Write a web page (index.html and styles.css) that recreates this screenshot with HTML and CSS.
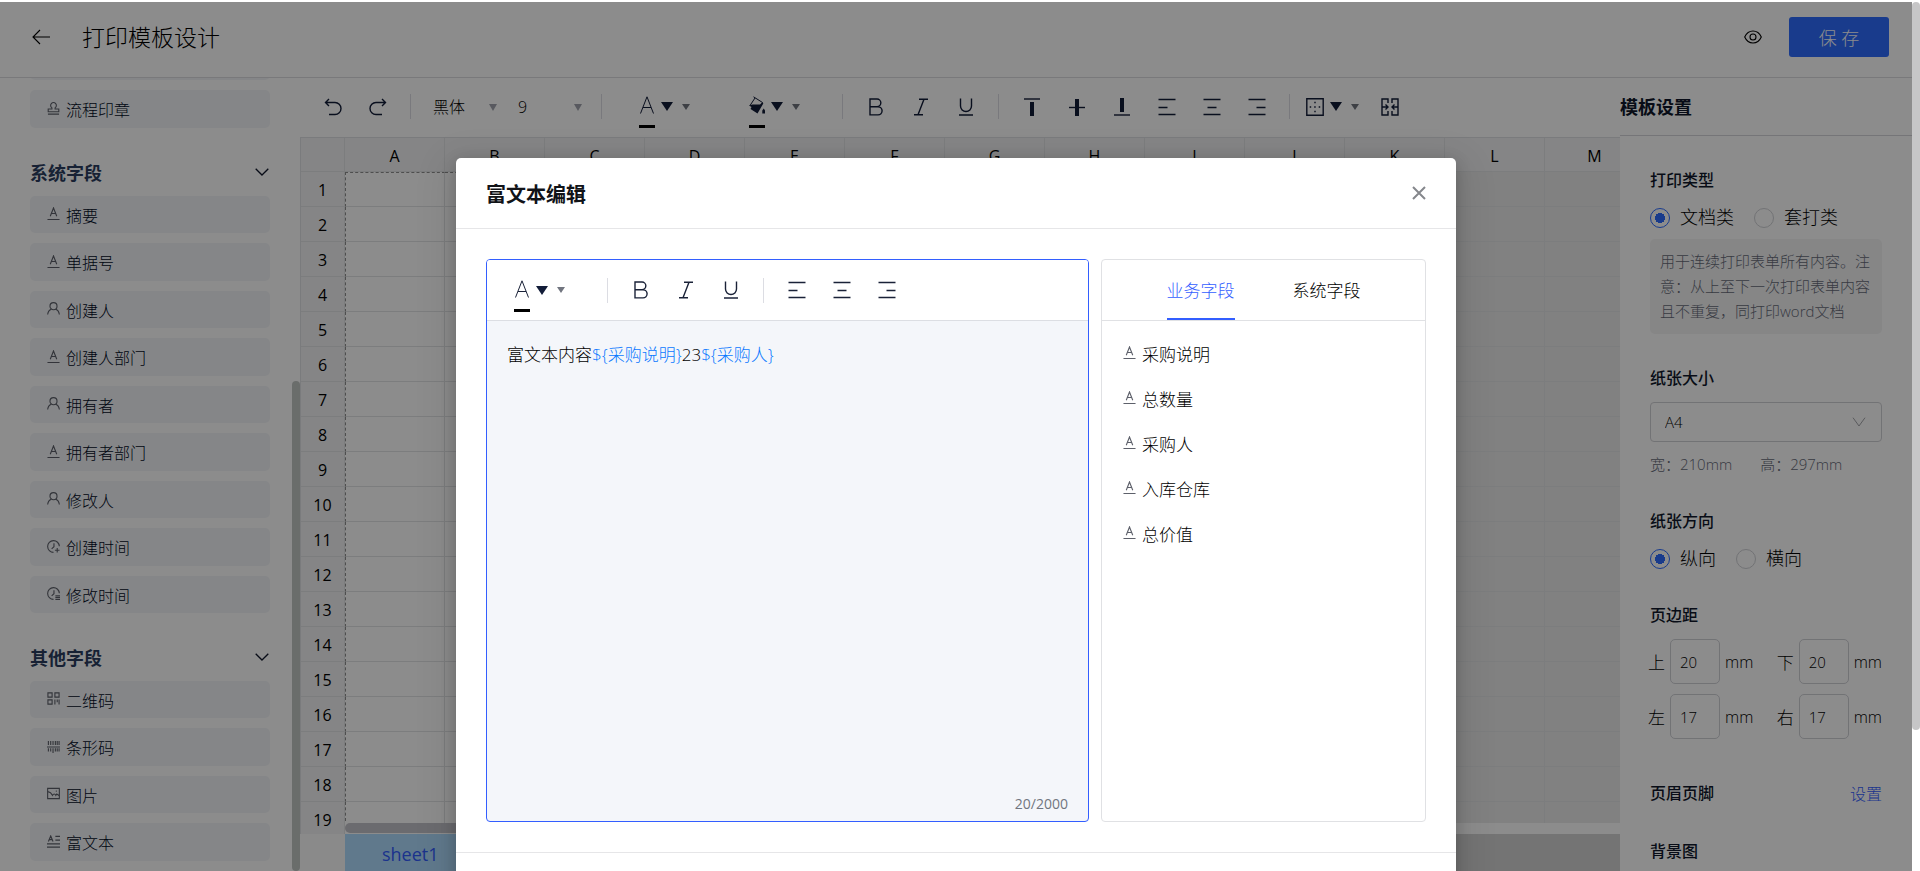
FILE: index.html
```html
<!DOCTYPE html>
<html lang="zh-CN">

<head>
  <meta charset="UTF-8">
  <meta name="viewport" content="width=device-width, initial-scale=1.0">
  <title>打印模板设计</title>
  <link rel="stylesheet" href="styles.css">
</head>

<body>
  <svg class="icon-defs" aria-hidden="true">
    <symbol id="i-text" viewBox="0 0 14 14"><path d="M3.500 10 7 1l3.500 9M4.800 7h4.400M.5 13.500h13" /></symbol>
    <symbol id="i-user" viewBox="0 0 14 14"><circle cx="7" cy="4.500" r="3.800" /><path d="M.7 13.500c.3-3 1.800-5 4-5.800M13.300 13.500c-.3-3-1.800-5-4-5.800" /></symbol>
    <symbol id="i-stamp" viewBox="0 0 14 14"><path d="M5.300 7.500V6.300a3.100 3.100 0 1 1 3.400 0v1.200h4v3H1.300v-3h4zM1 13h12" /></symbol>
    <symbol id="i-clock-add" viewBox="0 0 14 14"><path d="M13.300 6.800A6.300 6.300 0 1 0 7 13.300M7.500 3.500v3.800L5 9.500M11 8.500v5M8.500 11h5" /></symbol>
    <symbol id="i-clock-edit" viewBox="0 0 14 14"><path d="M13.300 6.800A6.300 6.300 0 1 0 7 13.300M7.500 3.500v3.800L5 9.500M9 9.500h5M9 11.500h5M9 13.500h5" /></symbol>
    <symbol id="i-qr" viewBox="0 0 14 14"><path d="M1 1h4.500v4.500H1zM8.500 1H13v4.500H8.500zM1 8.500h4.500V13H1zM8.500 8v5.500M11 8v3M13 8v5.500" /></symbol>
    <symbol id="i-barcode" viewBox="0 0 14 14"><path d="M1.500 1v4.500M4 1v4.500M6.500 1v4.500M9 1v4.500M11 1v4.500M13 1v4.500M0 7.500h14M1.500 9v3.500M4 9v3.500M6.500 9v5M9 9v3.500M11 9v3.500M13 9v3.500" /></symbol>
    <symbol id="i-image" viewBox="0 0 14 14"><path d="M.7 1.500h12.600v11H.7zM.7 5.500c2.300-1 3.800 1 5.300 3.500 1-2 2.500-2 3.500 0l1-1.500 2.800 2M9.500 4.500h1" /></symbol>
    <symbol id="i-rich" viewBox="0 0 14 14"><path d="M1.500 7 4 1l2.500 6M2.500 5h3M9 1.500h5M9 5.500h5M0 9.500h14M0 13h14" /></symbol>
    <symbol id="i-chevron" viewBox="0 0 14 8"><path d="m.7.7 6.300 6.300 6.300-6.300" /></symbol>
    <symbol id="i-arrow" viewBox="0 0 14 10"><path d="M1 .7 7 9l6-8.300" /></symbol>
    <symbol id="i-back" viewBox="0 0 18 16"><path d="M8 1 1 8l7 7M1 8h17" /></symbol>
    <symbol id="i-eye" viewBox="0 0 18 14"><path d="M.7 7C2.500 3 5.500 1 9 1s6.500 2 8.300 6c-1.800 4-4.800 6-8.300 6S2.500 11 .7 7z" /><circle cx="9" cy="7" r="3" /></symbol>
    <symbol id="i-undo" viewBox="0 0 18 18"><path d="M5 1 1.500 4.500 5 8M1.500 4.500H11a6 6 0 0 1 0 12H5" /></symbol>
    <symbol id="i-redo" viewBox="0 0 18 18"><path d="m13 1 3.500 3.500L13 8M16.500 4.500H7a6 6 0 0 0 0 12h6" /></symbol>
    <symbol id="i-color" viewBox="0 0 16 18"><path d="M1.500 17.500 8 .8l6.500 16.700M4 11.500h8" /></symbol>
    <symbol id="i-fill" viewBox="0 0 16 18"><path d="M4.500.8 13.500 6.500M6 2 1 9.500" /><path class="solid" d="M0 9.500 3.500 8.500H11L13.500 6l.8 1.500L8.500 17.500 1.500 13l1-2zM13.300 14.500l1.400-2 1.300 2v3h-2.700z" /></symbol>
    <symbol id="i-bold" viewBox="0 0 18 18"><path d="M3 1h7a3.800 3.800 0 0 1 0 7.700H3zM3 8.700h8a4 4 0 0 1 0 8.200H3z" /></symbol>
    <symbol id="i-italic" viewBox="0 0 18 18"><path d="M7 1.200h9M2 16.800h9M12 1.200 6 16.800" /></symbol>
    <symbol id="i-underline" viewBox="0 0 18 18"><path d="M3.500.5V8a5.500 5.500 0 0 0 11 0V.5M2 17h14" /></symbol>
    <symbol id="i-top" viewBox="0 0 18 18"><path d="M1 1h16" /><path class="solid" d="M7 4h4v14H7z" /></symbol>
    <symbol id="i-middle" viewBox="0 0 18 18"><path d="M1 9.500h16" /><path class="solid" d="M7 1h4v17H7z" /></symbol>
    <symbol id="i-bottom" viewBox="0 0 18 18"><path d="M1 17h16" /><path class="solid" d="M7 0h4v14H7z" /></symbol>
    <symbol id="i-left" viewBox="0 0 18 18"><path d="M.5 1.500h17M.5 9.500h9M.5 16.500h17" /></symbol>
    <symbol id="i-center" viewBox="0 0 18 18"><path d="M.5 1.500h17M4.500 9.500h9M.5 16.500h17" /></symbol>
    <symbol id="i-right" viewBox="0 0 18 18"><path d="M.5 1.500h17M8.500 9.500h9M.5 16.500h17" /></symbol>
    <symbol id="i-border" viewBox="0 0 18 18"><path d="M.8.8h16.400v16.400H.8z" /><path stroke-dasharray="1.500 3" d="M9 3.700v12M3.700 9h12" /></symbol>
    <symbol id="i-merge" viewBox="0 0 18 18"><path d="M7 5V1H1v16h6v-4M11 5V1h6v16h-6v-4M1 9h5.500M4.500 6.500 7 9l-2.500 2.500M17 9h-5.500M13.500 6.500 11 9l2.500 2.500" /></symbol>
    <symbol id="i-close" viewBox="0 0 14 14"><path d="m1 1 12 12M13 1 1 13" /></symbol>
  </svg>

  <div class="app">
    <header class="header">
      <button class="icon-btn" type="button" aria-label="返回"><svg width="18" height="16"><use href="#i-back" /></svg></button>
      <h1 class="header-title">打印模板设计</h1>
      <button class="icon-btn" type="button" aria-label="预览"><svg width="18" height="14"><use href="#i-eye" /></svg></button>
      <button class="btn-save" type="button">保 存</button>
    </header>

    <div class="workspace">
      <aside class="sidebar">
        <ul class="field-list">
          <li class="field-item"></li>
          <li class="field-item"><svg><use href="#i-stamp" /></svg>流程印章</li>
        </ul>
        <h2 class="group-title">系统字段<svg><use href="#i-chevron" /></svg></h2>
        <ul class="field-list">
          <li class="field-item"><svg><use href="#i-text" /></svg>摘要</li>
          <li class="field-item"><svg><use href="#i-text" /></svg>单据号</li>
          <li class="field-item"><svg><use href="#i-user" /></svg>创建人</li>
          <li class="field-item"><svg><use href="#i-text" /></svg>创建人部门</li>
          <li class="field-item"><svg><use href="#i-user" /></svg>拥有者</li>
          <li class="field-item"><svg><use href="#i-text" /></svg>拥有者部门</li>
          <li class="field-item"><svg><use href="#i-user" /></svg>修改人</li>
          <li class="field-item"><svg><use href="#i-clock-add" /></svg>创建时间</li>
          <li class="field-item"><svg><use href="#i-clock-edit" /></svg>修改时间</li>
        </ul>
        <h2 class="group-title">其他字段<svg><use href="#i-chevron" /></svg></h2>
        <ul class="field-list">
          <li class="field-item"><svg><use href="#i-qr" /></svg>二维码</li>
          <li class="field-item"><svg><use href="#i-barcode" /></svg>条形码</li>
          <li class="field-item"><svg><use href="#i-image" /></svg>图片</li>
          <li class="field-item"><svg><use href="#i-rich" /></svg>富文本</li>
        </ul>
        <div class="sidebar-thumb"></div>
      </aside>

      <main class="editor">
        <div class="toolbar">
          <button class="tool" type="button" aria-label="撤销"><svg><use href="#i-undo" /></svg></button>
          <button class="tool" type="button" aria-label="重做"><svg><use href="#i-redo" /></svg></button>
          <span class="divider"></span>
          <span class="tool-select"><select aria-label="字体"><option>黑体</option></select></span>
          <span class="tool-select"><select aria-label="字号"><option>9</option></select></span>
          <span class="divider"></span>
          <button class="tool-drop" type="button" aria-label="字体颜色"><span class="swatch"><svg><use href="#i-color" /></svg></span><i class="caret-dark"></i><i class="caret"></i></button>
          <button class="tool-drop" type="button" aria-label="填充颜色"><span class="swatch"><svg><use href="#i-fill" /></svg></span><i class="caret-dark"></i><i class="caret"></i></button>
          <span class="divider"></span>
          <button class="tool" type="button" aria-label="加粗"><svg><use href="#i-bold" /></svg></button>
          <button class="tool" type="button" aria-label="斜体"><svg><use href="#i-italic" /></svg></button>
          <button class="tool" type="button" aria-label="下划线"><svg><use href="#i-underline" /></svg></button>
          <span class="divider"></span>
          <button class="tool" type="button" aria-label="顶部对齐"><svg><use href="#i-top" /></svg></button>
          <button class="tool" type="button" aria-label="垂直居中"><svg><use href="#i-middle" /></svg></button>
          <button class="tool" type="button" aria-label="底部对齐"><svg><use href="#i-bottom" /></svg></button>
          <button class="tool" type="button" aria-label="左对齐"><svg><use href="#i-left" /></svg></button>
          <button class="tool" type="button" aria-label="居中"><svg><use href="#i-center" /></svg></button>
          <button class="tool" type="button" aria-label="右对齐"><svg><use href="#i-right" /></svg></button>
          <span class="divider"></span>
          <button class="tool-drop tool-border" type="button" aria-label="边框"><svg><use href="#i-border" /></svg><i class="caret-dark"></i><i class="caret"></i></button>
          <button class="tool" type="button" aria-label="合并单元格"><svg><use href="#i-merge" /></svg></button>
        </div>

        <div class="sheet">
          <table class="sheet-table">
            <thead><tr id="sheet-head"></tr></thead>
            <tbody id="sheet-body"></tbody>
          </table>
          <div class="sheet-scroll"><div class="sheet-scroll-thumb"></div></div>
        </div>
        <div class="sheet-tabs">
          <button class="sheet-tab" type="button">sheet1</button>
        </div>
      </main>

      <aside class="settings">
        <h2 class="settings-title">模板设置</h2>
        <div class="settings-body">
          <section>
            <h3>打印类型</h3>
            <div class="radio-row">
              <label><input type="radio" name="type" checked>文档类</label>
              <label><input type="radio" name="type">套打类</label>
            </div>
            <p class="help">用于连续打印表单所有内容。注意：从上至下一次打印表单内容且不重复，同打印word文档</p>
          </section>
          <section>
            <h3><label for="paper">纸张大小</label></h3>
            <div class="paper-select">
              <select id="paper"><option>A4</option></select>
              <svg><use href="#i-arrow" /></svg>
            </div>
            <p class="paper-size"><span>宽：210mm</span><span>高：297mm</span></p>
          </section>
          <section>
            <h3>纸张方向</h3>
            <div class="radio-row">
              <label><input type="radio" name="direction" checked>纵向</label>
              <label><input type="radio" name="direction">横向</label>
            </div>
          </section>
          <section>
            <h3>页边距</h3>
            <div class="margin-grid">
              <label>上<input type="text" value="20"><span>mm</span></label>
              <label>下<input type="text" value="20"><span>mm</span></label>
              <label>左<input type="text" value="17"><span>mm</span></label>
              <label>右<input type="text" value="17"><span>mm</span></label>
            </div>
          </section>
          <section class="setting-line">
            <h3>页眉页脚</h3>
            <a href="#">设置</a>
          </section>
          <section>
            <h3>背景图</h3>
          </section>
        </div>
      </aside>
    </div>

    <div class="mask">
      <div class="modal" role="dialog" aria-labelledby="modal-title">
        <div class="modal-header">
          <h2 id="modal-title">富文本编辑</h2>
          <button class="icon-btn modal-close" type="button" aria-label="关闭"><svg width="14" height="14"><use href="#i-close" /></svg></button>
        </div>
        <div class="modal-body">
          <div class="rich">
            <div class="rich-toolbar">
              <button class="tool-drop" type="button" aria-label="字体颜色"><span class="swatch"><svg><use href="#i-color" /></svg></span><i class="caret-dark"></i><i class="caret"></i></button>
              <span class="divider"></span>
              <button class="tool" type="button" aria-label="加粗"><svg><use href="#i-bold" /></svg></button>
              <button class="tool" type="button" aria-label="斜体"><svg><use href="#i-italic" /></svg></button>
              <button class="tool" type="button" aria-label="下划线"><svg><use href="#i-underline" /></svg></button>
              <span class="divider"></span>
              <button class="tool" type="button" aria-label="左对齐"><svg><use href="#i-left" /></svg></button>
              <button class="tool" type="button" aria-label="居中"><svg><use href="#i-center" /></svg></button>
              <button class="tool" type="button" aria-label="右对齐"><svg><use href="#i-right" /></svg></button>
            </div>
            <div class="rich-content" contenteditable="true" role="textbox" aria-label="富文本内容">富文本内容<span class="var">${采购说明}</span>23<span class="var">${采购人}</span></div>
            <div class="rich-count">20/2000</div>
          </div>
          <div class="fields">
            <div class="tabs" role="tablist">
              <button class="tab active" type="button" role="tab">业务字段</button>
              <button class="tab" type="button" role="tab">系统字段</button>
            </div>
            <ul class="var-list">
              <li><svg><use href="#i-text" /></svg>采购说明</li>
              <li><svg><use href="#i-text" /></svg>总数量</li>
              <li><svg><use href="#i-text" /></svg>采购人</li>
              <li><svg><use href="#i-text" /></svg>入库仓库</li>
              <li><svg><use href="#i-text" /></svg>总价值</li>
            </ul>
          </div>
        </div>
        <div class="modal-footer"></div>
      </div>
    </div>
  </div>
  <div class="page-scroll"><div class="page-scroll-thumb"></div></div>

  <script>
    const columns = 'ABCDEFGHIJKLM'.split('');
    const rowCount = 19;
    // columns after this one are outside the printable area
    const printColumns = 7;

    const $head = document.getElementById('sheet-head');
    const $body = document.getElementById('sheet-body');

    $head.appendChild(document.createElement('th'));
    columns.forEach(function (name) {
      const $th = document.createElement('th');
      $th.innerText = name;
      $head.appendChild($th);
    });

    for (let row = 1; row <= rowCount; row++) {
      const $tr = document.createElement('tr');
      const $th = document.createElement('th');
      $th.innerText = row;
      $tr.appendChild($th);
      columns.forEach(function (name, index) {
        const $td = document.createElement('td');
        if (index >= printColumns) {
          $td.classList.add('outside');
        }
        $tr.appendChild($td);
      });
      $body.appendChild($tr);
    }
  </script>
</body>

</html>
```
FILE: styles.css
```css
* {
  margin: 0;
  padding: 0;
  box-sizing: border-box;
}

html,
body {
  height: 100%;
}

body {
  display: flex;
  padding-top: 2px;
  overflow: hidden;
  background: #fff;
  color: #000;
  font-family: "Open Sans", "Noto Sans CJK SC", sans-serif;
  font-weight: 300;
  font-size: 17px;
}

button,
input,
select {
  font: inherit;
  color: inherit;
  background: none;
  border: 0;
}

select {
  appearance: none;
}

ul {
  list-style: none;
}

svg {
  flex-shrink: 0;
  fill: none;
  stroke: currentColor;
}

.solid {
  fill: currentColor;
  stroke: none;
}

.icon-defs {
  position: absolute;
  width: 0;
  height: 0;
}

.app {
  position: relative;
  flex: 1;
  min-width: 0;
  display: flex;
  flex-direction: column;
  overflow: hidden;
}

/* header */
.header {
  display: flex;
  align-items: center;
  height: 76px;
  padding: 0 23px 6px 32px;
  border-bottom: 1px solid #dcdde0;
}

.icon-btn {
  display: flex;
  stroke-width: 1.1;
  cursor: pointer;
}

.header-title {
  flex: 1;
  margin-left: 32px;
  padding-bottom: 2px;
  font-size: 23px;
  font-weight: 300;
}

.btn-save {
  width: 100px;
  height: 40px;
  margin-left: 27px;
  border-radius: 3px;
  background: #2e6cff;
  color: #fff;
  font-size: 18px;
  cursor: pointer;
}

.workspace {
  flex: 1;
  min-height: 0;
  display: flex;
}

/* left field list, scrolled to its end */
.sidebar {
  position: relative;
  flex: 0 0 300px;
  display: flex;
  flex-direction: column;
  justify-content: flex-end;
  padding: 0 30px 10px;
  overflow: hidden;
}

.field-list {
  display: flex;
  flex-direction: column;
  gap: 10px;
}

.field-item {
  display: flex;
  align-items: center;
  gap: 6px;
  height: 37px;
  padding-left: 17px;
  border-radius: 5px;
  background: #f3f5f8;
  color: #000a24;
  font-size: 16px;
}

.field-item:nth-child(even) {
  height: 38px;
}

.field-item svg,
.var-list svg {
  width: 13px;
  height: 13px;
  margin-bottom: 2px;
  color: #5d606a;
  stroke-width: 1.2;
}

.group-title {
  display: flex;
  justify-content: space-between;
  align-items: center;
  padding: 33px 1px 11px 0;
  color: #2b3d60;
  font-size: 18px;
  font-weight: 700;
  line-height: 24px;
}

.group-title svg {
  width: 14px;
  height: 8px;
  margin-bottom: 2px;
  color: #10172b;
  stroke-width: 1.3;
}

.sidebar-thumb {
  position: absolute;
  right: 0;
  bottom: 0;
  width: 8px;
  height: 490px;
  border-radius: 4px;
  background: #c2c6c4;
}

/* toolbar */
.editor {
  flex: 1;
  min-width: 0;
  display: flex;
  flex-direction: column;
}

.toolbar {
  display: flex;
  align-items: center;
  height: 59px;
  padding: 0 0 2px 10px;
  color: #121c38;
}

.tool {
  flex-shrink: 0;
  display: flex;
  align-items: center;
  justify-content: center;
  width: 45px;
  height: 45px;
  cursor: pointer;
}

.tool svg,
.tool-border svg {
  width: 18px;
  height: 18px;
  stroke-width: 1.4;
}

.divider {
  flex: 0 0 1px;
  height: 25px;
  margin: 0 10px;
  background: #dcdde3;
}

.tool-select {
  position: relative;
  width: 85px;
}

.tool-select select {
  width: 100%;
  padding-left: 12px;
  color: #000;
  font-size: 16px;
}

.tool-select::after {
  content: "";
  position: absolute;
  right: 9px;
  top: 9px;
  border: 4px solid transparent;
  border-top: 7px solid #a0a2ad;
  border-bottom: 0;
}

.tool-drop {
  flex-shrink: 0;
  display: flex;
  align-items: center;
  width: 110px;
  height: 45px;
  padding-left: 27px;
  cursor: pointer;
}

.tool-border {
  width: 67px;
  padding-left: 6px;
}

.swatch {
  height: 32px;
  margin-top: 11px;
  border-bottom: 3px solid #000;
}

.swatch svg {
  display: block;
  width: 16px;
  height: 18px;
}

.caret-dark {
  margin-left: 6px;
  border: 6px solid transparent;
  border-top: 9px solid #121c38;
  border-bottom: 0;
}

.caret {
  margin-left: 9px;
  border: 4px solid transparent;
  border-top: 6px solid #71757f;
  border-bottom: 0;
}

/* spreadsheet */
.sheet {
  position: relative;
  flex: 1;
  min-height: 0;
  overflow: hidden;
  border-top: 1px solid #dfe0e3;
  border-left: 1px solid #dfe0e3;
}

.sheet-table {
  table-layout: fixed;
  width: 1344px;
  border-spacing: 0;
}

.sheet-table th,
.sheet-table td {
  width: 100px;
  height: 35px;
  border-right: 1px solid #e2e3e6;
  border-bottom: 1px solid #e2e3e6;
}

.sheet-table th {
  padding-top: 2px;
  background: #f2f3f4;
  color: #000;
  font-weight: 400;
  font-size: 16px;
}

.sheet-table thead th {
  height: 34px;
  font-weight: 500;
}

.sheet-table th:first-child {
  width: 44px;
}

.sheet-table .outside {
  background: #ececec;
}

.sheet-table td:nth-child(2) {
  border-left: 1px dashed #8f8f8f;
}

.sheet-table tr:first-child td:not(.outside) {
  border-top: 1px dashed #8f8f8f;
}

.sheet-scroll {
  position: absolute;
  left: 44px;
  right: 0;
  bottom: 0;
  height: 11px;
  background: #fff;
}

.sheet-scroll-thumb {
  width: 60%;
  height: 10px;
  border-radius: 5px;
  background: #c4c4ca;
}

.sheet-tabs {
  height: 37px;
  padding-left: 45px;
  background: linear-gradient(to right, #fbfbfc 45px, #d4d4d4 45px);
}

.sheet-tab {
  height: 37px;
  padding: 2px 37px 0;
  background: #afdcff;
  color: #335eff;
  font-size: 18px;
  font-weight: 400;
}

/* template settings */
.settings {
  flex: 0 0 292px;
  overflow: hidden;
}

.settings-title {
  height: 58px;
  border-bottom: 1px solid #d5d6da;
  color: #10172b;
  font-size: 18px;
  font-weight: 700;
  line-height: 59px;
}

.settings-body {
  display: flex;
  flex-direction: column;
  gap: 30px;
  padding: 32px 30px 0;
}

.settings h3 {
  margin-bottom: 12px;
  color: #10172b;
  font-size: 16px;
  font-weight: 500;
  line-height: 24px;
}

.radio-row {
  display: flex;
  gap: 20px;
  height: 26px;
  margin-bottom: 2px;
  font-size: 18px;
  line-height: 26px;
}

.radio-row label {
  display: flex;
  align-items: center;
  gap: 10px;
}

.radio-row input {
  appearance: none;
  width: 20px;
  height: 20px;
  margin-top: 2px;
  border: 1px solid #d0d1d6;
  border-radius: 50%;
}

.radio-row input:checked {
  border-color: #2e6cff;
  background: radial-gradient(#2e6cff 5px, transparent 5px);
}

.help {
  margin: 9px 0 2px;
  padding: 10px;
  border-radius: 5px;
  background: #f4f4f5;
  color: #666a78;
  font-size: 15px;
  line-height: 25px;
}

.paper-select {
  position: relative;
}

.paper-select select {
  width: 100%;
  height: 40px;
  padding: 0 14px;
  border: 1px solid #d0d1d6;
  border-radius: 4px;
  font-size: 15px;
}

.paper-select svg {
  position: absolute;
  right: 16px;
  top: 15px;
  width: 14px;
  height: 10px;
  color: #a3a4a9;
}

.paper-size {
  display: flex;
  gap: 28px;
  margin: 9px 0 2px;
  color: #666a78;
  font-size: 15px;
  line-height: 26px;
}

.margin-grid {
  display: grid;
  grid-template-columns: auto auto;
  justify-content: space-between;
  gap: 10px 0;
  margin-left: -2px;
  padding-bottom: 8px;
}

.margin-grid label {
  display: flex;
  align-items: center;
  gap: 5px;
}

.margin-grid input {
  width: 50px;
  height: 45px;
  padding-left: 9px;
  border: 1px solid #d0d1d6;
  border-radius: 5px;
  font-size: 15px;
}

.margin-grid span {
  font-size: 16px;
}

.setting-line {
  display: flex;
  justify-content: space-between;
  align-items: center;
  height: 32px;
}

.setting-line h3 {
  margin: 0;
}

.setting-line a {
  color: #335eff;
  font-size: 16px;
  text-decoration: none;
}

/* modal */
.mask {
  position: absolute;
  inset: 0;
  display: flex;
  justify-content: center;
  align-items: flex-start;
  padding-top: 156px;
  background: rgba(0, 0, 0, .45);
}

.modal {
  width: 1000px;
  border-radius: 5px;
  background: #fff;
  box-shadow: 0 4px 16px rgba(0, 0, 0, .2), 0 10px 36px 10px rgba(0, 0, 0, .08);
}

.modal-header {
  display: flex;
  justify-content: space-between;
  align-items: center;
  height: 71px;
  padding: 0 30px;
  border-bottom: 1px solid #e6e6e8;
}

.modal-header h2 {
  color: #111318;
  font-size: 20px;
  font-weight: 700;
}

.modal-close {
  color: #85878c;
  stroke-width: 2;
}

.modal-body {
  display: flex;
  gap: 12px;
  padding: 30px;
}

.rich,
.fields {
  height: 563px;
  border: 1px solid #e0e1e4;
  border-radius: 4px;
  display: flex;
  flex-direction: column;
  overflow: hidden;
}

.rich {
  flex: 1;
  border-color: #335eff;
  background: #f4f6fa;
}

.rich-toolbar {
  display: flex;
  align-items: center;
  height: 61px;
  border-bottom: 1px solid #dcdee3;
  background: #fff;
  color: #1a2238;
}

.rich-content {
  flex: 1;
  padding: 20px;
  outline: 0;
  line-height: 28px;
}

.var {
  color: #0a78ff;
}

.rich-count {
  padding: 0 20px 6px;
  color: #71757f;
  font-size: 14px;
  font-weight: 400;
  line-height: 22px;
  text-align: right;
}

.fields {
  flex: 0 0 325px;
}

.tabs {
  display: flex;
  justify-content: center;
  gap: 58px;
  height: 61px;
  border-bottom: 1px solid #e0e1e4;
}

.tab {
  border-bottom: 2px solid transparent;
  cursor: pointer;
}

.tab.active {
  border-bottom-color: #335eff;
  color: #335eff;
}

.var-list {
  padding: 10px 21px;
}

.var-list li {
  display: flex;
  align-items: center;
  gap: 6px;
  height: 45px;
}

.modal-footer {
  height: 70px;
  border-top: 1px solid #e6e6e8;
}

/* page scrollbar */
.page-scroll {
  flex: 0 0 8px;
}

.page-scroll-thumb {
  height: 728px;
  border-radius: 4px;
  background: #c6c6c7;
}
```
